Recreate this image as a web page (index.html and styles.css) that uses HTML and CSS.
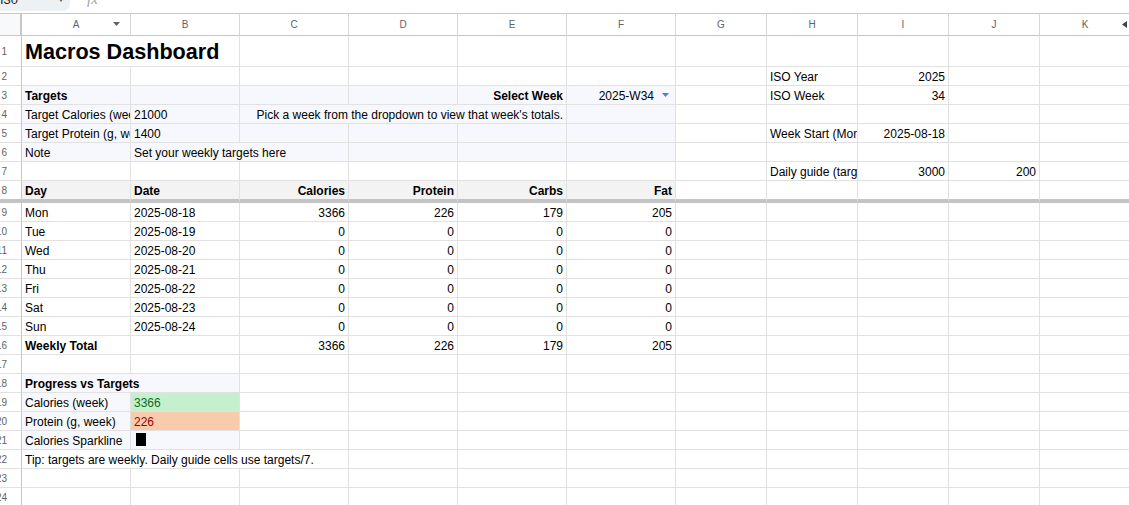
FILE: index.html
```html
<!DOCTYPE html>
<html>
<head>
<meta charset="utf-8">
<title>Macros Dashboard</title>
<link rel="stylesheet" href="styles.css">
</head>
<body>
<div class="topbar">
  <div class="namebox"><span class="nb-text">I30</span><span class="nb-arrow">▼</span></div>
  <span class="fx">fx</span>
</div>
<div class="sheet">
  <div class="row colhdr">
    <div class="corner"></div>
    <div class="ch">A<svg class="ch-arrow" width="7" height="4" viewBox="0 0 7 4"><path d="M0 0H7L3.5 4Z" fill="#5f6368"/></svg></div>
    <div class="ch">B</div><div class="ch">C</div><div class="ch">D</div><div class="ch">E</div><div class="ch">F</div>
    <div class="ch">G</div><div class="ch">H</div><div class="ch">I</div><div class="ch">J</div>
    <div class="ch">K<svg class="k-arrow" width="5" height="7" viewBox="0 0 5 7"><path d="M5 0V7L0 3.5Z" fill="#444"/></svg></div>
  </div>

  <div class="row r1">
    <div class="rh">1</div>
    <div class="c title s2">Macros Dashboard</div>
    <div class="c"></div><div class="c"></div><div class="c"></div><div class="c"></div>
    <div class="c"></div><div class="c"></div><div class="c"></div><div class="c"></div><div class="c"></div>
  </div>

  <div class="row">
    <div class="rh">2</div>
    <div class="c"></div><div class="c"></div><div class="c"></div><div class="c"></div><div class="c"></div><div class="c"></div>
    <div class="c"></div><div class="c">ISO Year</div><div class="c r">2025</div><div class="c"></div><div class="c"></div>
  </div>

  <div class="row">
    <div class="rh">3</div>
    <div class="c bl b">Targets</div><div class="c bl"></div><div class="c bl"></div><div class="c bl"></div>
    <div class="c bl b r">Select Week</div>
    <div class="c bl r dd">2025-W34<svg class="dd-arrow" width="7" height="4" viewBox="0 0 7 4"><path d="M0 0H7L3.5 4Z" fill="#4a7fe0"/></svg></div>
    <div class="c"></div><div class="c">ISO Week</div><div class="c r">34</div><div class="c"></div><div class="c"></div>
  </div>

  <div class="row">
    <div class="rh">4</div>
    <div class="c bl">Target Calories (weekly)</div><div class="c bl">21000</div>
    <div class="c bl r s3">Pick a week from the dropdown to view that week's totals.</div>
    <div class="c bl"></div>
    <div class="c"></div><div class="c"></div><div class="c"></div><div class="c"></div><div class="c"></div>
  </div>

  <div class="row">
    <div class="rh">5</div>
    <div class="c bl">Target Protein (g, weekly)</div><div class="c bl">1400</div>
    <div class="c bl"></div><div class="c bl"></div><div class="c bl"></div><div class="c bl"></div>
    <div class="c"></div><div class="c">Week Start (Monday)</div><div class="c r">2025-08-18</div><div class="c"></div><div class="c"></div>
  </div>

  <div class="row">
    <div class="rh">6</div>
    <div class="c bl">Note</div><div class="c bl s2">Set your weekly targets here</div>
    <div class="c bl"></div><div class="c bl"></div><div class="c bl"></div>
    <div class="c"></div><div class="c"></div><div class="c"></div><div class="c"></div><div class="c"></div>
  </div>

  <div class="row">
    <div class="rh">7</div>
    <div class="c"></div><div class="c"></div><div class="c"></div><div class="c"></div><div class="c"></div><div class="c"></div>
    <div class="c"></div><div class="c">Daily guide (targets/7)</div><div class="c r">3000</div><div class="c r">200</div><div class="c"></div>
  </div>

  <div class="row r8">
    <div class="rh">8</div>
    <div class="c hd b">Day</div><div class="c hd b">Date</div><div class="c hd b r">Calories</div>
    <div class="c hd b r">Protein</div><div class="c hd b r">Carbs</div><div class="c hd b r">Fat</div>
    <div class="c"></div><div class="c"></div><div class="c"></div><div class="c"></div><div class="c"></div>
  </div>

  <div class="row">
    <div class="rh">9</div>
    <div class="c">Mon</div><div class="c">2025-08-18</div><div class="c r">3366</div><div class="c r">226</div><div class="c r">179</div><div class="c r">205</div>
    <div class="c"></div><div class="c"></div><div class="c"></div><div class="c"></div><div class="c"></div>
  </div>
  <div class="row">
    <div class="rh">10</div>
    <div class="c">Tue</div><div class="c">2025-08-19</div><div class="c r">0</div><div class="c r">0</div><div class="c r">0</div><div class="c r">0</div>
    <div class="c"></div><div class="c"></div><div class="c"></div><div class="c"></div><div class="c"></div>
  </div>
  <div class="row">
    <div class="rh">11</div>
    <div class="c">Wed</div><div class="c">2025-08-20</div><div class="c r">0</div><div class="c r">0</div><div class="c r">0</div><div class="c r">0</div>
    <div class="c"></div><div class="c"></div><div class="c"></div><div class="c"></div><div class="c"></div>
  </div>
  <div class="row">
    <div class="rh">12</div>
    <div class="c">Thu</div><div class="c">2025-08-21</div><div class="c r">0</div><div class="c r">0</div><div class="c r">0</div><div class="c r">0</div>
    <div class="c"></div><div class="c"></div><div class="c"></div><div class="c"></div><div class="c"></div>
  </div>
  <div class="row">
    <div class="rh">13</div>
    <div class="c">Fri</div><div class="c">2025-08-22</div><div class="c r">0</div><div class="c r">0</div><div class="c r">0</div><div class="c r">0</div>
    <div class="c"></div><div class="c"></div><div class="c"></div><div class="c"></div><div class="c"></div>
  </div>
  <div class="row">
    <div class="rh">14</div>
    <div class="c">Sat</div><div class="c">2025-08-23</div><div class="c r">0</div><div class="c r">0</div><div class="c r">0</div><div class="c r">0</div>
    <div class="c"></div><div class="c"></div><div class="c"></div><div class="c"></div><div class="c"></div>
  </div>
  <div class="row">
    <div class="rh">15</div>
    <div class="c">Sun</div><div class="c">2025-08-24</div><div class="c r">0</div><div class="c r">0</div><div class="c r">0</div><div class="c r">0</div>
    <div class="c"></div><div class="c"></div><div class="c"></div><div class="c"></div><div class="c"></div>
  </div>
  <div class="row">
    <div class="rh">16</div>
    <div class="c b">Weekly Total</div><div class="c"></div><div class="c r">3366</div><div class="c r">226</div><div class="c r">179</div><div class="c r">205</div>
    <div class="c"></div><div class="c"></div><div class="c"></div><div class="c"></div><div class="c"></div>
  </div>
  <div class="row">
    <div class="rh">17</div>
    <div class="c"></div><div class="c"></div><div class="c"></div><div class="c"></div><div class="c"></div><div class="c"></div>
    <div class="c"></div><div class="c"></div><div class="c"></div><div class="c"></div><div class="c"></div>
  </div>
  <div class="row">
    <div class="rh">18</div>
    <div class="c bl b s2">Progress vs Targets</div>
    <div class="c"></div><div class="c"></div><div class="c"></div><div class="c"></div>
    <div class="c"></div><div class="c"></div><div class="c"></div><div class="c"></div><div class="c"></div>
  </div>
  <div class="row">
    <div class="rh">19</div>
    <div class="c bl">Calories (week)</div><div class="c good">3366</div>
    <div class="c"></div><div class="c"></div><div class="c"></div><div class="c"></div>
    <div class="c"></div><div class="c"></div><div class="c"></div><div class="c"></div><div class="c"></div>
  </div>
  <div class="row">
    <div class="rh">20</div>
    <div class="c bl">Protein (g, week)</div><div class="c bad">226</div>
    <div class="c"></div><div class="c"></div><div class="c"></div><div class="c"></div>
    <div class="c"></div><div class="c"></div><div class="c"></div><div class="c"></div><div class="c"></div>
  </div>
  <div class="row">
    <div class="rh">21</div>
    <div class="c bl">Calories Sparkline</div><div class="c bl"><div class="spark"></div></div>
    <div class="c"></div><div class="c"></div><div class="c"></div><div class="c"></div>
    <div class="c"></div><div class="c"></div><div class="c"></div><div class="c"></div><div class="c"></div>
  </div>
  <div class="row">
    <div class="rh">22</div>
    <div class="c s3">Tip: targets are weekly. Daily guide cells use targets/7.</div>
    <div class="c"></div><div class="c"></div><div class="c"></div>
    <div class="c"></div><div class="c"></div><div class="c"></div><div class="c"></div><div class="c"></div>
  </div>
  <div class="row">
    <div class="rh">23</div>
    <div class="c"></div><div class="c"></div><div class="c"></div><div class="c"></div><div class="c"></div><div class="c"></div>
    <div class="c"></div><div class="c"></div><div class="c"></div><div class="c"></div><div class="c"></div>
  </div>
  <div class="row">
    <div class="rh">24</div>
    <div class="c"></div><div class="c"></div><div class="c"></div><div class="c"></div><div class="c"></div><div class="c"></div>
    <div class="c"></div><div class="c"></div><div class="c"></div><div class="c"></div><div class="c"></div>
  </div>
</div>
</body>
</html>
```

FILE: styles.css
```css
* { box-sizing: border-box; }

html, body {
  margin: 0;
  padding: 0;
  background: #ffffff;
  overflow: hidden;
}

body {
  font-family: "Liberation Sans", Arial, sans-serif;
  color: #000;
}

/* ---------- top (cropped) formula bar ---------- */
.topbar {
  height: 13px;
  overflow: hidden;
  display: flex;
  align-items: flex-start;
}

.namebox {
  width: 70px;
  height: 21px;
  margin-top: -10px;
  background: #eef1f4;
  border-bottom-right-radius: 7px;
  display: flex;
  align-items: flex-start;
  font-size: 13px;
  line-height: 19px;
  color: #1f1f1f;
}

.nb-text {
  flex: 1;
}

.nb-arrow {
  font-size: 8px;
  line-height: 19px;
  color: #444;
  margin-right: 5px;
}

.fx {
  margin-left: 17px;
  margin-top: -10px;
  font-family: "Liberation Serif", serif;
  font-style: italic;
  font-size: 15px;
  line-height: 19px;
  color: #a0a4a8;
}

/* ---------- grid ---------- */
.sheet {
  width: 1129px;
  overflow: hidden;
}

.row {
  display: grid;
  grid-template-columns: 22px repeat(6, 109px) repeat(5, 91px);
  height: 19px;
}

.c {
  border-right: 1px solid #e1e1e1;
  border-bottom: 1px solid #e1e1e1;
  padding: 2px 3px 0 3px;
  font-size: 12px;
  line-height: 16px;
  white-space: nowrap;
  overflow: hidden;
  color: #000;
}

.r { text-align: right; }
.b { font-weight: bold; }
.s2 { grid-column: span 2; }
.s3 { grid-column: span 3; }

.bl { background: #f7f8fd; }
.hd { background: #f3f3f3; }

.good {
  background: #c6efce;
  color: #0a6b1f;
}

.bad {
  background: #f9cbad;
  color: #9c0006;
}

/* row header */
.rh {
  border-right: 1px solid #c7c7c7;
  border-bottom: 1px solid #e1e1e1;
  padding-right: 14px;
  display: flex;
  align-items: center;
  justify-content: flex-end;
  font-size: 10px;
  color: #5f6368;
  white-space: nowrap;
  overflow: hidden;
}

/* column header */
.colhdr {
  height: 23px;
}

.colhdr > div {
  border-top: 1px solid #c7c7c7;
  border-bottom: 1px solid #c7c7c7;
}

.corner {
  background: #f8f9fa;
  border-right: 2px solid #c7c7c7;
}

.ch {
  position: relative;
  border-right: 1px solid #d6d6d6;
  font-size: 10px;
  line-height: 21px;
  text-align: center;
  color: #5f6368;
  overflow: hidden;
}

.ch-arrow {
  position: absolute;
  right: 10px;
  top: 8px;
}

.k-arrow {
  position: absolute;
  right: 3px;
  top: 7px;
}

/* title row */
.r1 { height: 31px; }

.title {
  font-size: 21.6px;
  font-weight: bold;
  line-height: 28px;
  padding-top: 2px;
}

/* frozen divider row */
.r8 { height: 22px; }
.r8 > div { border-bottom: 4px solid #c4c4c4; }

/* dropdown chip */
.dd { padding-right: 6px; }

.dd-arrow {
  margin-left: 8px;
  vertical-align: 3px;
}

/* sparkline */
.spark {
  width: 10px;
  height: 13px;
  margin: 0 0 0 2px;
  background: #000;
}
```
